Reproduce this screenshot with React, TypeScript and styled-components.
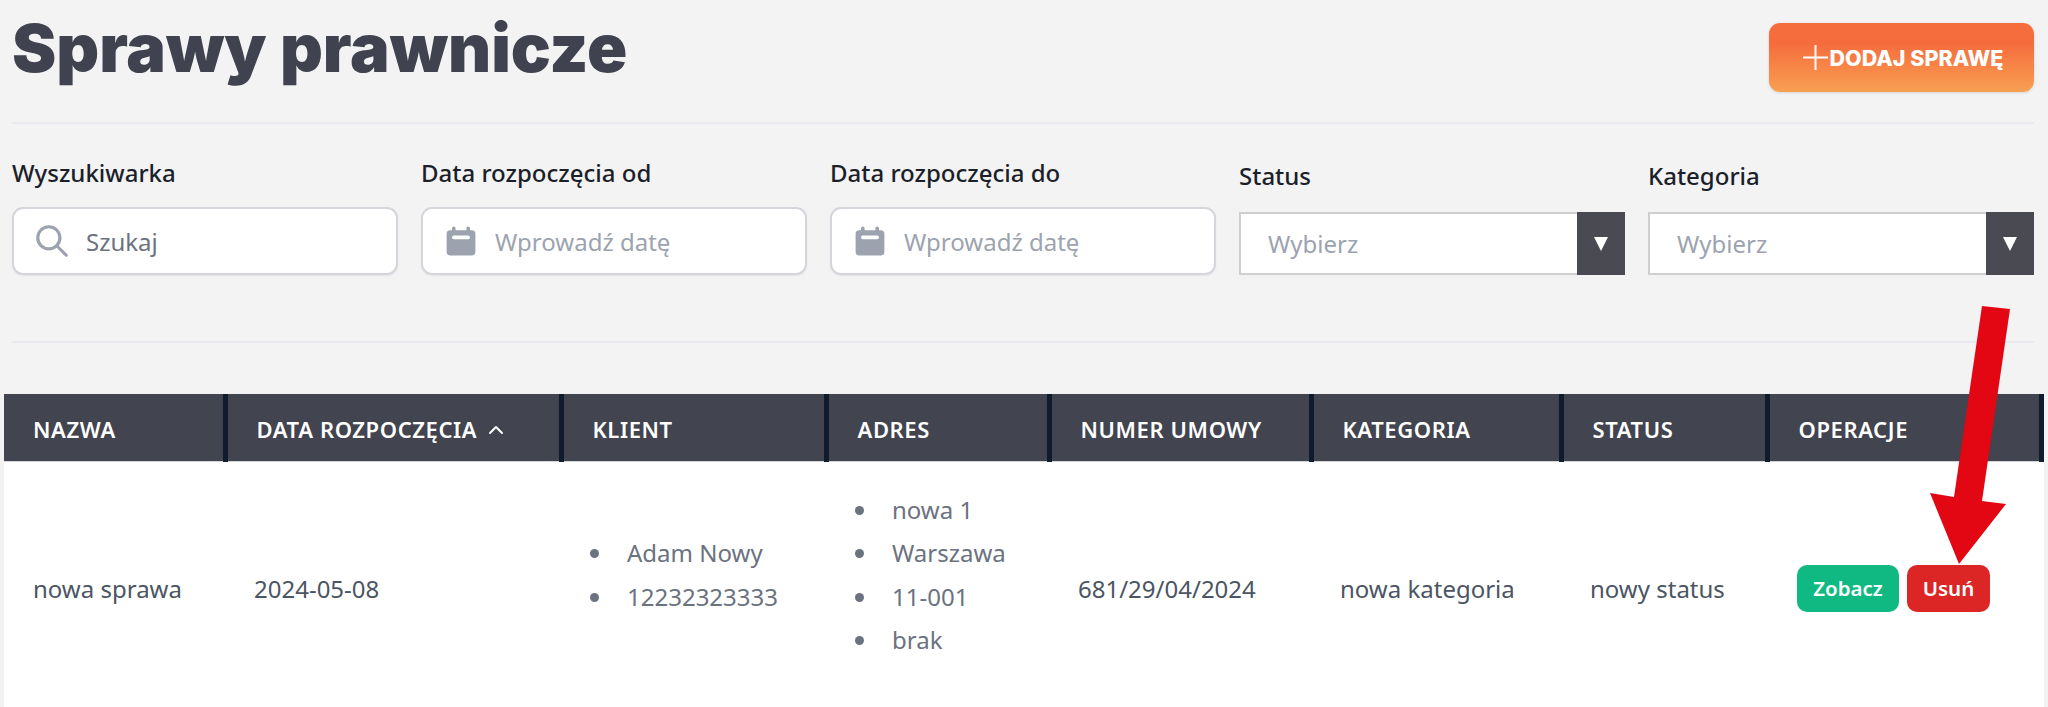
import styled, { createGlobalStyle } from "styled-components";
import { ChevronUp } from "lucide-react";
import { HiCalendar, HiOutlineSearch } from "react-icons/hi";

const GlobalStyle = createGlobalStyle`
  html, body {
    margin: 0;
    padding: 0;
    background: #f3f3f3;
    font-family: "Noto Sans", "Liberation Sans", sans-serif;
  }
`;

const Page = styled.div`
  position: relative;
  height: 707px;
  overflow: hidden;
  padding-left: 4px;
  box-sizing: border-box;
`;

const Top = styled.div`
  padding: 0 14px 0 8px;
`;

const Header = styled.header`
  display: flex;
  justify-content: space-between;
  align-items: flex-start;
  height: 124px;
  padding-top: 23px;
  box-sizing: border-box;
  border-bottom: 2px solid #e9e9ef;
`;

const Title = styled.h1`
  margin: -25px 0 0;
  font-family: Inter, "Liberation Sans", sans-serif;
  font-size: 66.5px;
  line-height: 100px;
  font-weight: 900;
  color: #40424f;
`;

const AddButton = styled.button`
  display: flex;
  align-items: center;
  justify-content: center;
  gap: 2px;
  width: 265px;
  height: 69px;
  padding-left: 9px;
  border: 0;
  border-radius: 11px;
  background: linear-gradient(180deg, #f56d3d 30%, #f8a052 100%);
  box-shadow: 0 1px 3px rgba(0, 0, 0, 0.12);
  color: #fff;
  font-family: Inter, "Liberation Sans", sans-serif;
  font-size: 21.5px;
  font-weight: 800;
`;

const Filters = styled.div`
  display: grid;
  grid-template-columns: repeat(5, 1fr);
  column-gap: 23px;
  height: 219px;
  padding-top: 34px;
  box-sizing: border-box;
  border-bottom: 2px solid #e9e9ef;
`;

const Field = styled.div`
  display: flex;
  flex-direction: column;
  justify-content: flex-end;
  height: 117px;
`;

const Label = styled.label`
  font-size: 24px;
  line-height: 30px;
  font-weight: 500;
  color: #1b1f2a;
`;

const InputBox = styled.div`
  display: flex;
  align-items: center;
  gap: 19px;
  height: 68px;
  margin-top: 19px;
  padding-left: 23px;
  box-sizing: border-box;
  background: #fff;
  border: 2px solid #d5d6dc;
  border-radius: 11px;
  box-shadow: 0 1px 2px rgba(0, 0, 0, 0.06);
  color: #9ca3af;

  svg {
    flex: none;
  }
`;

const Placeholder = styled.span<{ $dark?: boolean }>`
  font-size: 24px;
  color: ${(p) => (p.$dark ? "#6b7280" : "#9ca3af")};
`;

const SelectBox = styled.div`
  display: flex;
  height: 63px;
  margin-top: 21px;
  background: #fff;
  border: solid #cfcfcf;
  border-width: 2px 0 2px 2px;
  box-sizing: border-box;
`;

const SelectValue = styled.span`
  flex: 1;
  padding-left: 27px;
  font-size: 24px;
  line-height: 60px;
  color: #9ca3af;
`;

const SelectArrow = styled.span`
  display: flex;
  align-items: center;
  justify-content: center;
  width: 48px;
  margin: -2px 0;
  background: #4a4a52;

  &::after {
    content: "";
    border-style: solid;
    border-width: 14px 7px 0;
    border-color: #fff transparent transparent;
  }
`;

const Table = styled.table`
  width: 2037px;
  margin-top: 51px;
  border-collapse: collapse;
  table-layout: fixed;
  background: #fff;
`;

const HeadCell = styled.th<{ $width: number }>`
  width: ${(p) => p.$width}px;
  height: 67px;
  padding: 4px 0 0 29px;
  box-sizing: border-box;
  background: #42444f;
  border-right: 5px solid #111b2e;
  border-bottom: 1px solid #d1d5db;
  text-align: left;
  color: #fff;
  font-size: 22px;
  font-weight: 600;
  letter-spacing: 0.6px;
  text-transform: uppercase;
  white-space: nowrap;

  svg {
    margin-left: 7px;
    vertical-align: -4px;
  }
`;

const BodyCell = styled.td`
  height: 254px;
  padding: 0 0 0 29px;
  box-sizing: border-box;
  vertical-align: middle;
  font-size: 24px;
  color: #4b5563;
  white-space: nowrap;
`;

const List = styled.ul`
  margin: 0 0 27px;
  padding: 0 0 0 24px;
  line-height: 43.6px;
  color: #6b7280;

  li {
    padding-left: 13px;
  }
`;

const Actions = styled.div`
  display: flex;
  gap: 8px;
  padding-left: 1px;
`;

const ActionButton = styled.button<{ $color: string; $width: number }>`
  width: ${(p) => p.$width}px;
  height: 47px;
  border: 0;
  border-radius: 10px;
  background: ${(p) => p.$color};
  color: #fff;
  font-family: inherit;
  font-size: 20.5px;
  font-weight: 600;
`;

const Arrow = styled.svg`
  position: absolute;
  top: 0;
  left: 0;
  width: 2048px;
  height: 707px;
  pointer-events: none;
`;

const columns = [
  { name: "Nazwa", width: 221 },
  { name: "Data rozpoczęcia", width: 336, sorted: true },
  { name: "Klient", width: 265 },
  { name: "Adres", width: 223 },
  { name: "Numer umowy", width: 262 },
  { name: "Kategoria", width: 250 },
  { name: "Status", width: 206 },
  { name: "Operacje", width: 274 },
];

const DateField = ({ label }: { label: string }) => (
  <Field>
    <Label>{label}</Label>
    <InputBox>
      <HiCalendar size={36} style={{ margin: "0 -3px" }} />
      <Placeholder>Wprowadź datę</Placeholder>
    </InputBox>
  </Field>
);

const SelectField = ({ label }: { label: string }) => (
  <Field>
    <Label>{label}</Label>
    <SelectBox>
      <SelectValue>Wybierz</SelectValue>
      <SelectArrow />
    </SelectBox>
  </Field>
);

const App = () => {
  return (
    <Page>
      <GlobalStyle />
      <Top>
        <Header>
          <Title>Sprawy prawnicze</Title>
          <AddButton>
            <svg width="25" height="25" viewBox="0 0 25 25" stroke="#fff" strokeWidth="2">
              <path d="M12.5 0v25M0 12.5h25" />
            </svg>
            DODAJ SPRAWĘ
          </AddButton>
        </Header>
        <Filters>
          <Field>
            <Label>Wyszukiwarka</Label>
            <InputBox>
              <HiOutlineSearch size={38} style={{ margin: "0 -4px" }} />
              <Placeholder $dark>Szukaj</Placeholder>
            </InputBox>
          </Field>
          <DateField label="Data rozpoczęcia od" />
          <DateField label="Data rozpoczęcia do" />
          <SelectField label="Status" />
          <SelectField label="Kategoria" />
        </Filters>
      </Top>
      <Table>
        <thead>
          <tr>
            {columns.map((col) => (
              <HeadCell key={col.name} $width={col.width}>
                {col.name}
                {col.sorted && <ChevronUp size={24} strokeWidth={2} />}
              </HeadCell>
            ))}
          </tr>
        </thead>
        <tbody>
          <tr>
            <BodyCell>nowa sprawa</BodyCell>
            <BodyCell>2024-05-08</BodyCell>
            <BodyCell>
              <List>
                <li>Adam Nowy</li>
                <li>12232323333</li>
              </List>
            </BodyCell>
            <BodyCell>
              <List>
                <li>nowa 1</li>
                <li>Warszawa</li>
                <li>11-001</li>
                <li>brak</li>
              </List>
            </BodyCell>
            <BodyCell>681/29/04/2024</BodyCell>
            <BodyCell>nowa kategoria</BodyCell>
            <BodyCell>nowy status</BodyCell>
            <BodyCell>
              <Actions>
                <ActionButton $color="#10b981" $width={102}>Zobacz</ActionButton>
                <ActionButton $color="#dc2626" $width={83}>Usuń</ActionButton>
              </Actions>
            </BodyCell>
          </tr>
        </tbody>
      </Table>
      <Arrow viewBox="0 0 2048 707">
        <polygon
          fill="#e30613"
          points="1982,306 2010,309 1982,501 2006,504 1959,564 1930,493 1954,497"
        />
      </Arrow>
    </Page>
  );
};

export default App;
